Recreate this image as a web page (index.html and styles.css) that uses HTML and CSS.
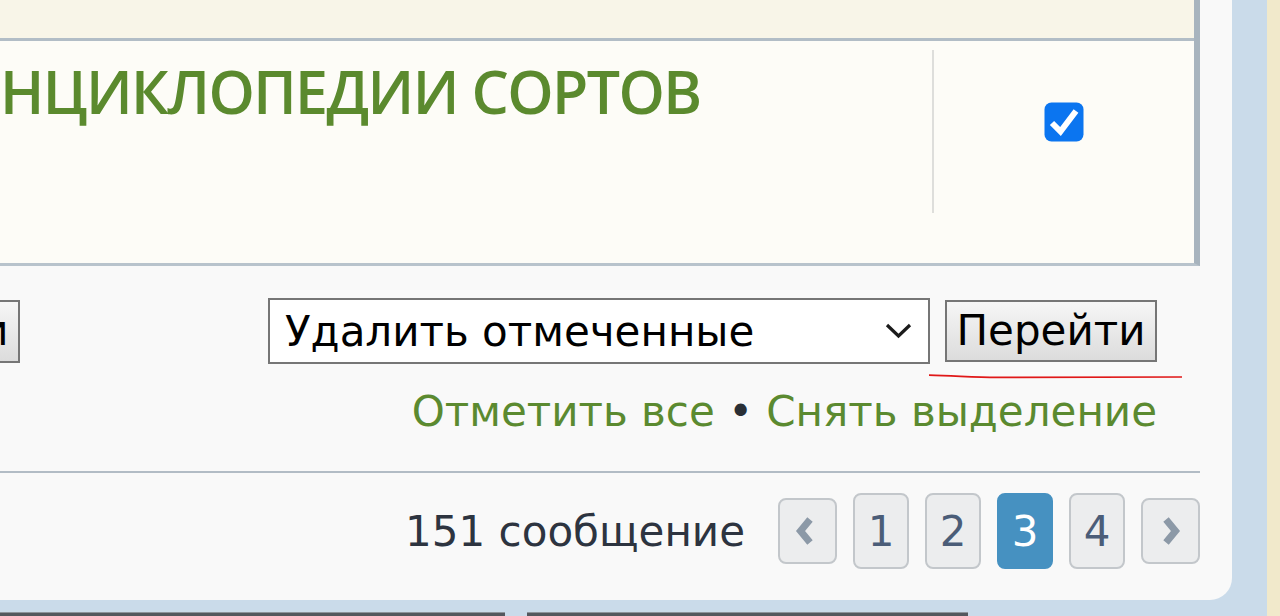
FILE: index.html
```html
<!DOCTYPE html>
<html lang="ru">
<head>
<meta charset="utf-8">
<title>Темы</title>
<link rel="stylesheet" href="styles.css">
</head>
<body>
<div class="page">
  <div class="panel">
    <div class="topics">
      <div class="topics-head"></div>
      <div class="topic-row">
        <div class="topic-main"><a class="topic-title" href="#">НЦИКЛОПЕДИИ СОРТОВ</a></div>
        <div class="topic-mark">
          <svg class="checkbox" width="40" height="40" viewBox="0 0 40 40"><rect x="0.5" y="0.5" width="39" height="39" rx="7" fill="#0B75F0"/><polyline points="8,21 16.5,29.5 32,9" fill="none" stroke="#fff" stroke-width="6"/></svg>
        </div>
      </div>
    </div>
    <div class="actions">
      <button class="btn btn-cut" type="button">Перейти</button>
      <div class="actions-right">
        <div class="select"><span>Удалить отмеченные</span><svg class="chev" width="27" height="16" viewBox="0 0 27 16"><polyline points="2,2 13.5,13 25,2" fill="none" stroke="#1b1b1b" stroke-width="3.2"/></svg></div>
        <button class="btn" type="button">Перейти</button>
      </div>
    </div>
    <div class="marklinks"><a href="#">Отметить все</a> • <a href="#">Снять выделение</a></div>
    <div class="sep"></div>
    <div class="pagination">
      <span class="count">151 сообщение</span>
      <ul class="pages">
        <li class="pg arrow prev"><svg width="20" height="30" viewBox="0 0 20 30"><polyline points="15,3.5 5.5,15 15,26.5" fill="none" stroke="#8C99A7" stroke-width="7"/></svg></li>
        <li class="pg">1</li>
        <li class="pg">2</li>
        <li class="pg active">3</li>
        <li class="pg">4</li>
        <li class="pg arrow next"><svg width="20" height="30" viewBox="0 0 20 30"><polyline points="5,3.5 14.5,15 5,26.5" fill="none" stroke="#8C99A7" stroke-width="7"/></svg></li>
      </ul>
    </div>
  </div>
  <div class="strip-cream"></div>
  <div class="below"><div class="bar bar1"></div><div class="bar bar2"></div></div>
</div>
<svg class="redline" width="1280" height="616" viewBox="0 0 1280 616"><path d="M929 375.2 C 955 375.6, 975 377.6, 1000 377.4 L 1182 377" fill="none" stroke="#E01818" stroke-width="1.7"/></svg>
</body>
</html>
```
FILE: styles.css
```css
html, body {
  margin: 0;
  padding: 0;
}
body {
  width: 1280px;
  height: 616px;
  overflow: hidden;
  position: relative;
  background: #CADBEA;
  font-family: "DejaVu Sans", Verdana, sans-serif;
}
.page {
  display: grid;
  grid-template-columns: 1232px 35px 13px;
  grid-template-rows: 600px 16px;
  height: 616px;
}
.panel {
  grid-column: 1;
  grid-row: 1;
  background: #F9F9F9;
  border-bottom-right-radius: 22px;
  padding-right: 32px;
  box-sizing: border-box;
  display: flex;
  flex-direction: column;
}
.strip-cream {
  grid-column: 3;
  grid-row: 1 / span 2;
  background: #F1E9CB;
}
.below {
  grid-column: 1 / span 2;
  grid-row: 2;
  display: flex;
  gap: 22px;
  padding-top: 12px;
  box-sizing: border-box;
}
.bar {
  height: 4px;
  background: #53585E;
  border-top: 1px solid #8D949B;
}
.bar1 { width: 505px; }
.bar2 { width: 441px; }

/* topics table */
.topics {
  width: 1200px;
  box-sizing: border-box;
  border-right: 6px solid #A8B4BE;
  border-bottom: 3px solid #B8C3CC;
}
.topics-head {
  height: 38px;
  background: #F8F5E8;
  border-bottom: 3px solid #B2BDC6;
}
.topic-row {
  height: 222px;
  background: #FDFCF7;
  display: flex;
}
.topic-main {
  flex: 1;
  padding-top: 21px;
}
.topic-title {
  display: block;
  font-family: "Open Sans", sans-serif;
  font-weight: 600;
  font-size: 59px;
  line-height: 59px;
  letter-spacing: -1.6px;
  color: #5B8A2E;
  text-decoration: none;
  white-space: nowrap;
}
.topic-mark {
  width: 262px;
  height: 163px;
  margin-top: 9px;
  border-left: 2px solid #DEDEDB;
  display: flex;
  justify-content: center;
  padding-top: 52px;
  box-sizing: border-box;
}
.checkbox { display: block; }

/* actions */
.actions {
  display: flex;
  align-items: center;
  justify-content: space-between;
  margin-top: 32px;
  height: 66px;
  padding-right: 43px;
}
.btn {
  width: 212px;
  height: 62px;
  box-sizing: border-box;
  padding: 0;
  border: 2px solid #767676;
  border-radius: 0;
  background: linear-gradient(#F6F6F6, #DCDCDC);
  color: #000;
  font-family: "DejaVu Sans", Verdana, sans-serif;
  font-size: 42px;
  line-height: 1;
  text-align: center;
}
.btn-cut {
  margin-left: -192px;
  height: 63px;
}
.actions-right {
  display: flex;
  align-items: center;
  gap: 15px;
}
.select {
  width: 662px;
  height: 66px;
  box-sizing: border-box;
  border: 2px solid #767676;
  background: #fff;
  display: flex;
  align-items: center;
  justify-content: space-between;
  padding: 0 16px 0 15px;
  font-size: 42px;
  color: #000;
}
.chev { display: block; }

/* mark links */
.marklinks {
  margin-top: 23px;
  padding-right: 43px;
  text-align: right;
  font-size: 42px;
  line-height: 50px;
  color: #2A2F36;
}
.marklinks a {
  color: #5B8A30;
  text-decoration: none;
}
.sep {
  margin-top: 34px;
  width: 1200px;
  height: 0;
  border-top: 2px solid #B2BCC5;
}

/* pagination */
.pagination {
  margin-top: 20px;
  height: 76px;
  display: flex;
  justify-content: flex-end;
  align-items: center;
}
.count {
  font-size: 42px;
  color: #2D3440;
  margin-right: 33px;
}
.pages {
  display: flex;
  align-items: center;
  gap: 16px;
  list-style: none;
  margin: 0;
  padding: 0;
}
.pg {
  width: 56px;
  height: 76px;
  box-sizing: border-box;
  border: 2px solid #C3C7CB;
  border-radius: 8px;
  background: #ECEDEE;
  color: #4B5D78;
  display: flex;
  align-items: center;
  justify-content: center;
  font-size: 42px;
}
.pg.arrow {
  width: 59px;
  height: 66px;
}
.pg.arrow svg { display: block; }
.pg.prev svg { margin-right: 6px; }
.pg.active {
  background: #4691C1;
  border-color: #4691C1;
  color: #fff;
}
.redline {
  position: absolute;
  left: 0;
  top: 0;
  pointer-events: none;
}
```
